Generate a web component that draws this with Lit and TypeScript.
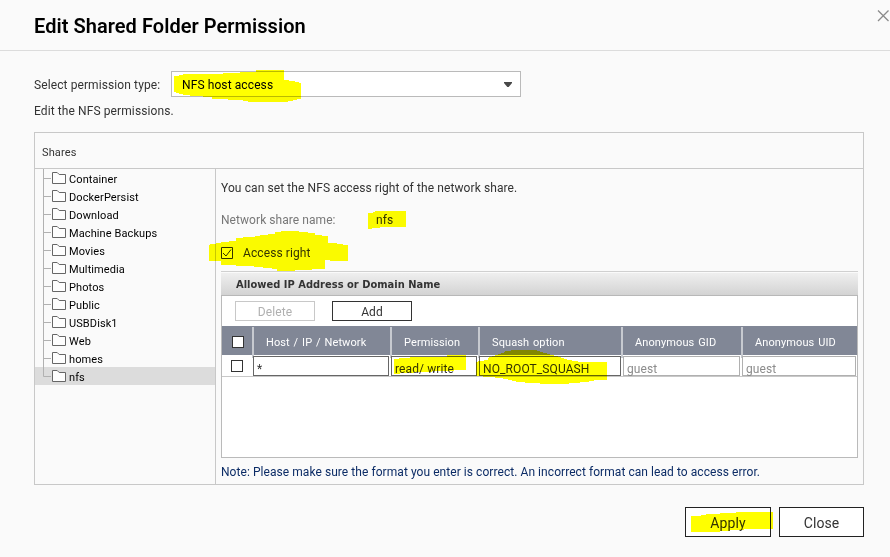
import { LitElement, html, css, svg } from "lit";
import { customElement, property } from "lit/decorators.js";
import { classMap } from "lit/directives/class-map.js";

const SHARES = ["Container", "DockerPersist", "Download", "Machine Backups", "Movies", "Multimedia", "Photos", "Public", "USBDisk1", "Web", "homes", "nfs"];

const MARKS = [
  "174,76 183,75 183,74 223,74 223,73 256,72 256,70 284,70 284,80 293,81 301,83 301,99 293,100 293,101 283,102 253,102 243,101 243,100 212,99 212,97 193,96 180,94 174,92",
  "368,213 373,213 373,212 375,212 375,211 406,211 406,227 380,227 380,228 372,228 372,229 368,229",
  "209,245 211,244 221,243 221,242 236,241 236,238 250,237 260,236 260,235 275,234 275,232 286,231 297,231 301,232 315,233 315,235 328,236 328,243 337,243 337,244 348,245 348,261 330,261 330,260 325,260 325,269 312,269 312,270 277,271 277,269 258,267 250,266 221,265 221,261 209,261",
  "394,359 403,358 417,357 447,357 447,355 466,355 466,370 441,371 423,372 405,373 394,374",
  "476,362 480,361 488,360 488,358 496,355 505,352 505,351 518,350 535,350 545,353 556,356 565,359 574,361 582,362 607,362 607,380 594,380 594,381 575,383 562,384 548,384 531,383 518,382 510,380 500,378 490,377 476,376",
  "691,516 701,516 701,515 706,515 706,514 720,514 720,513 736,513 736,512 773,512 773,529 748,529 740,530 720,531 720,532 691,532",
];

@customElement("share-row")
class ShareRow extends LitElement {
  @property() name = "";
  @property({ type: Boolean }) selected = false;
  @property({ type: Boolean }) last = false;

  static styles = css`
    :host { display: block; }
    .row { display: flex; height: 18px; padding-left: 8px; color: #000; font-size: 11px; line-height: 22px; }
    .selected { background: #dcdcdc; }
    .branch { width: 9px; height: 18px; flex: none; }
    .folder { width: 14px; height: 18px; flex: none; }
    .name { margin-left: 3px; white-space: nowrap; letter-spacing: 0.1px; }
  `;

  render() {
    return html`<div class=${classMap({ row: true, selected: this.selected })}>
      <svg class="branch" viewBox="0 0 9 18" fill="none" stroke="#b1b1b1">
        <path d=${this.last ? "M.5 0V9.5H8" : "M.5 0V18M0 9.5H8"} />
      </svg>
      <svg class="folder" viewBox="0 0 14 18" fill="#fdfdfd" stroke="#666">
        <path d="M.5 3.5H5.2L7.2 5.5H13.5V14.5H.5Z" />
      </svg>
      <span class="name">${this.name}</span>
    </div>`;
  }
}

@customElement("app-root")
class AppRoot extends LitElement {
  static styles = css`
    :host { display: block; position: relative; width: 890px; height: 557px; overflow: hidden; background: #fafafa; color: #333; font-family: Roboto, "Liberation Sans", sans-serif; font-size: 12px; letter-spacing: 0.1px; }
    * { box-sizing: border-box; }
    .header { display: flex; justify-content: space-between; height: 51px; border-bottom: 1px solid #dcdcdc; padding-left: 34px; }
    .title { margin: 0; font-size: 20px; font-weight: 600; line-height: 52px; color: #000; letter-spacing: 0.05px; white-space: nowrap; }
    .close { width: 12px; height: 12px; margin: 10px 1px 0 0; }
    .body { padding: 20px 26px 0 34px; }
    .type { display: flex; align-items: center; height: 26px; }
    .type-label { width: 137px; white-space: nowrap; line-height: 28px; padding-top: 2px; }
    .select { display: flex; align-items: center; justify-content: space-between; width: 350px; height: 26px; border: 1px solid #bababa; background: #fff; padding: 0 8px 0 10px; color: #000; line-height: 26px; }
    .value { padding-top: 2px; }
    .arrow { width: 8px; height: 5px; }
    .hint { height: 35px; line-height: 28px; }
    .panel { width: 830px; height: 353px; border: 1px solid #c8c8c8; }
    .panel-head { height: 36px; border-bottom: 1px solid #c8c8c8; padding-left: 7px; line-height: 39px; font-size: 11px; letter-spacing: 0.12px; }
    .split { display: flex; height: 315px; }
    .tree { width: 181px; border-right: 1px solid #c8c8c8; }
    .detail { flex: 1; padding: 0 5px; }
    .intro { height: 34px; line-height: 38px; letter-spacing: 0.1px; }
    .name-row { display: flex; height: 34px; line-height: 34px; }
    .name-label { width: 155px; color: #777; letter-spacing: 0.06px; }
    .access { display: flex; align-items: center; gap: 10px; height: 34px; padding-bottom: 2px; }
    .access-text { line-height: 32px; }
    .check { display: block; width: 12px; height: 12px; border: 1px solid #333; background: #fff; }
    .tick { width: 12px; height: 12px; }
    .grid-title { height: 25px; border-top: 1px solid #d0d0d0; border-bottom: 1px solid #b8b8b8; background: linear-gradient(#fafafa 0 1px, #efefef 1px, #d3d3d3); padding-left: 15px; font: bold 11px/25px "DejaVu Sans Condensed", "DejaVu Sans", sans-serif; letter-spacing: 0.02px; }
    .grid { height: 162px; border: 1px solid #bababa; border-top: 0; background: #fff; }
    .tools { display: flex; gap: 17px; height: 30px; padding: 5px 0 0 13px; }
    .tool { width: 80px; height: 20px; border: 1px solid #333; text-align: center; line-height: 21px; font-size: 12px; }
    .off { border-color: #c8c8c8; color: #b0b0b0; }
    .cells { display: grid; grid-template-columns: 30px 138px 88px 143px 120px 116px; }
    .heads { height: 29px; background: #818796; color: #fff; }
    .head { border-left: 2px solid #c7cad0; margin-top: 1px; padding-left: 12px; font-size: 11px; line-height: 31px; white-space: nowrap; word-spacing: 1px; }
    .pick { display: flex; align-items: center; justify-content: center; }
    .heads .pick { padding-left: 2px; }
    .row { height: 22px; border-bottom: 1px solid #c8c8c8; }
    .field { height: 20px; margin: 1px 1px 0 1px; border: 1px solid #666; padding-left: 3px; font-size: 12px; line-height: 24px; color: #333; white-space: nowrap; }
    .field:nth-child(4) { margin-right: 0; }
    .field:nth-child(5) { margin-left: 2px; }
    .dim { border-color: #b0b0b0; color: #8c8c8c; }
    .note { line-height: 28px; color: #0c2c66; white-space: nowrap; letter-spacing: 0.06px; }
    .footer { display: flex; justify-content: flex-end; gap: 8px; margin-top: 22px; }
    .button { width: 85px; height: 30px; border: 1px solid #222; background: #fff; text-align: center; font-size: 14px; line-height: 30px; }
    .wide { width: 86px; }
    .marks { position: absolute; inset: 0; width: 890px; height: 557px; mix-blend-mode: multiply; pointer-events: none; }
  `;

  render() {
    return html`
      <header class="header">
        <h1 class="title">Edit Shared Folder Permission</h1>
        <svg class="close" viewBox="0 0 12 12" stroke="#8a8a8a" stroke-width="1.3" fill="none"><path d="M1 .5L11.5 11M11.5 .5L1 11" /></svg>
      </header>
      <div class="body">
        <div class="type">
          <span class="type-label">Select permission type:</span>
          <div class="select"><span class="value">NFS host access</span>
            <svg class="arrow" viewBox="0 0 8 5"><path d="M0 0H8V1L4.7 5H3.3L0 1Z" fill="#484848" /></svg>
          </div>
        </div>
        <div class="hint">Edit the NFS permissions.</div>
        <section class="panel">
          <div class="panel-head">Shares</div>
          <div class="split">
            <nav class="tree">
              ${SHARES.map((n, i) => html`<share-row name=${n} ?selected=${n === "nfs"} ?last=${i === SHARES.length - 1}></share-row>`)}
            </nav>
            <div class="detail">
              <div class="intro">You can set the NFS access right of the network share.</div>
              <div class="name-row"><span class="name-label">Network share name:</span><span>nfs</span></div>
              <div class="access">
                <svg class="tick" viewBox="0 0 12 12" fill="#fff" stroke="#333"><path d="M.5 .5H11.5V11.5H.5Z" /><path d="M2 6L5 9L10 2.5" fill="none" /></svg>
                <span class="access-text">Access right</span>
              </div>
              <div class="grid-title">Allowed IP Address or Domain Name</div>
              <div class="grid">
                <div class="tools"><div class="tool off">Delete</div><div class="tool">Add</div></div>
                <div class="cells heads">
                  <div class="pick"><span class="check"></span></div>
                  ${["Host / IP / Network", "Permission", "Squash option", "Anonymous GID", "Anonymous UID"].map((h) => html`<div class="head">${h}</div>`)}
                </div>
                <div class="cells row">
                  <div class="pick"><span class="check"></span></div>
                  ${["*", "read/ write", "NO_ROOT_SQUASH", "guest", "guest"].map((v) => html`<div class=${classMap({ field: true, dim: v === "guest" })}>${v}</div>`)}
                </div>
              </div>
              <div class="note">Note: Please make sure the format you enter is correct. An incorrect format can lead to access error.</div>
            </div>
          </div>
        </section>
        <footer class="footer"><div class="button wide">Apply</div><div class="button">Close</div></footer>
      </div>
      <svg class="marks" viewBox="0 0 890 557" fill="#ff0" shape-rendering="crispEdges">${MARKS.map((p) => svg`<polygon points=${p} />`)}</svg>
    `;
  }
}
